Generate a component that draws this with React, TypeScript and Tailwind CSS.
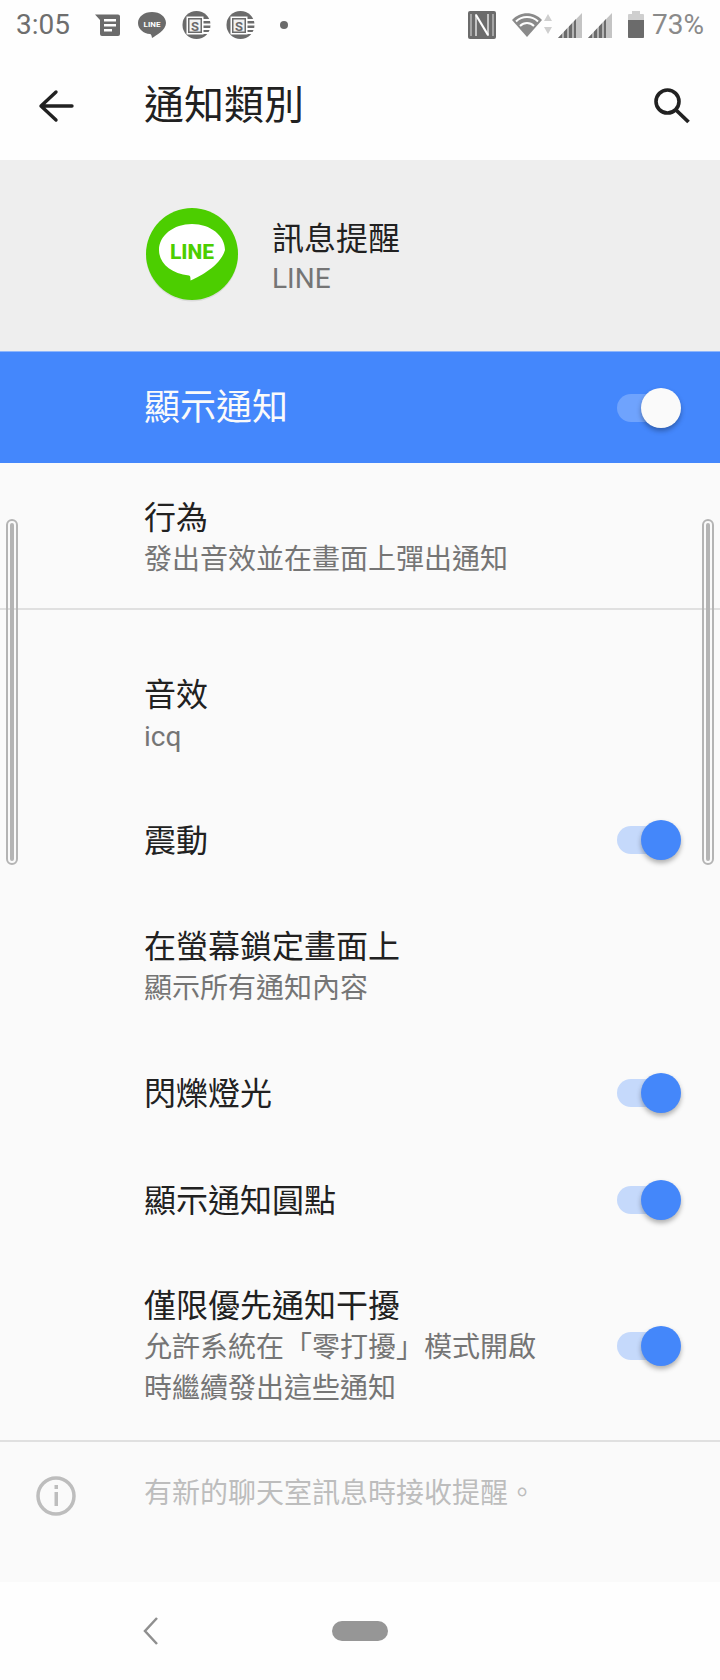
import React from 'react';

const font = { fontFamily: 'Roboto, "Noto Sans CJK TC", sans-serif' };

const Toggle = ({ white = false }: { white?: boolean }) => (
  <div className="relative h-[40px] w-[64px] shrink-0">
    <div className={`absolute left-0 top-[6px] h-[28px] w-[56px] rounded-full ${white ? 'bg-[#6fa3fd]' : 'bg-[#c5d9fb]'}`} />
    <div
      className={`absolute right-0 top-0 h-[40px] w-[40px] rounded-full shadow-[0_3px_5px_rgba(0,0,0,0.3)] ${white ? 'bg-[#fafafa]' : 'bg-[#4487fa]'}`}
    />
  </div>
);

const Row = ({ title, sub, on, h }: { title: string; sub?: string[]; on?: boolean; h: string }) => (
  <div className={`flex items-center justify-between pl-[144px] pr-[39px] ${h}`}>
    <div className="pt-[2px]">
      <div className="text-[32px] leading-[42px] text-[#212121]">{title}</div>
      {sub?.map(s => (
        <div key={s} className="text-[28px] leading-[41px] text-[#757575]">{s}</div>
      ))}
    </div>
    {on && <Toggle />}
  </div>
);

const ScrollBar = ({ side }: { side: string }) => (
  <div className={`absolute top-[519px] h-[346px] w-[12px] rounded-full border-2 border-[#b4b4b4] p-[2px] ${side}`}>
    <div className="h-full w-full rounded-full bg-[#b4b4b4]" />
  </div>
);

const SIcon = () => (
  <svg width="30" height="30" viewBox="0 0 30 30" className="shrink-0">
    <circle cx="14.500" cy="15" r="14" fill="#6b6b6b" />
    <rect x="4.500" y="6.500" width="17" height="18" fill="#fefefe" />
    <rect x="6" y="8" width="14" height="15" fill="#6b6b6b" />
    <rect x="7.500" y="9.500" width="11" height="12" fill="#f2f2f2" />
    <path d="M21 9h9v2h-9zM21 13.500h9v2h-9zM21 18h9v2h-9zM21 22h7v2h-7z" fill="#fefefe" />
    <text x="13" y="20.500" fontSize="13" fontWeight="700" textAnchor="middle" fill="#6b6b6b" fontFamily="Roboto">S</text>
  </svg>
);

const Signal = () => (
  <svg width="25" height="26" viewBox="0 0 25 26" className="shrink-0">
    <path d="M0 26 L24 1 V26Z" fill="#c4c4c4" />
    <path d="M0 26 L18 7 V26Z" fill="#6b6b6b" />
    <path d="M5 26V19M10 26V14M15 26V9" stroke="#fefefe" strokeWidth="1" fill="none" />
  </svg>
);

const StatusBar = () => (
  <div className="flex h-[54px] items-center bg-[#fefefe] pb-[5px] pl-[16px]">
    <span className="w-[54px] text-[28px] leading-[32px] text-[#6e6e6e]">3:05</span>
    <svg width="26" height="24" viewBox="0 0 26 24" className="ml-[25px] shrink-0">
      <path d="M0 1.500 H23 a2 2 0 0 1 2 2 V21 a2 2 0 0 1 -2 2 H7 a2 2 0 0 1 -2 -2 V7Z" fill="#6b6b6b" />
      <path d="M9 6h12v2.500H9zM9 11h12v2.500H9zM9 16h8v2.500H9z" fill="#fefefe" />
    </svg>
    <svg width="28" height="28" viewBox="0 0 28 28" className="ml-[17px] shrink-0">
      <path d="M14 1C6 1 0 5.800 0 12c0 6 5.500 10.500 12 11 1 .1 1.500 1 2 4 4-2.500 14-8 14-15C28 5.800 22 1 14 1Z" fill="#6b6b6b" />
      <text x="14" y="15.500" fontSize="8" fontWeight="700" textAnchor="middle" fill="#fefefe" fontFamily="Roboto">LINE</text>
    </svg>
    <div className="ml-[16px]"><SIcon /></div>
    <div className="ml-[14px]"><SIcon /></div>
    <div className="ml-[24px] h-[8px] w-[8px] shrink-0 rounded-full bg-[#6b6b6b]" />
    <svg width="28" height="28" viewBox="0 0 28 28" className="ml-[180px] shrink-0">
      <rect x="0" y="0" width="28" height="28" rx="2" fill="#6b6b6b" />
      <path d="M8 3v22M20 3v22" stroke="#fefefe" strokeWidth="1.200" fill="none" />
      <path d="M8 4L20 24" stroke="#fefefe" strokeWidth="2.200" fill="none" />
      <path d="M3 3v22M25 3v22" stroke="#fefefe" strokeWidth="0.800" fill="none" />
    </svg>
    <svg width="40" height="26" viewBox="0 0 40 26" className="ml-[16px] shrink-0">
      <path d="M15 25 L0 8 C8 -1 22 -1 30 8Z" fill="#8a8a8a" />
      <path d="M4 9.500C10 3.500 20 3.500 26 9.500M8 14C12 10 18 10 22 14" stroke="#fefefe" strokeWidth="2" fill="none" />
      <path d="M36 2l4 7h-8zM32 15h8l-4 7z" fill="#cfcfcf" />
    </svg>
    <div className="ml-[6px]"><Signal /></div>
    <div className="ml-[5px]"><Signal /></div>
    <svg width="16" height="27" viewBox="0 0 16 27" className="ml-[15px] shrink-0">
      <path d="M4 0h8v3h3a1 1 0 0 1 1 1v22a1 1 0 0 1-1 1H1a1 1 0 0 1-1-1V4a1 1 0 0 1 1-1h3z" fill="#cfcfcf" />
      <path d="M0 9h16v17a1 1 0 0 1-1 1H1a1 1 0 0 1-1-1z" fill="#6b6b6b" />
    </svg>
    <span className="ml-[8px] text-[28px] leading-[32px] text-[#8a8a8a]">73%</span>
  </div>
);

export default function App() {
  return (
    <div className="relative flex h-[1680px] w-[720px] flex-col overflow-hidden bg-[#fafafa]" style={font}>
      <StatusBar />

      {/* toolbar */}
      <div className="flex h-[106px] items-center justify-between bg-[#fefefe] pb-[2px] pl-[38px] pr-[30px]">
        <svg width="36" height="34" viewBox="0 0 36 34" className="shrink-0">
          <path d="M34 17H4M18 3L3 17l15 14" stroke="#212121" strokeWidth="3.400" fill="none" strokeLinecap="round" strokeLinejoin="round" />
        </svg>
        <h1 className="ml-[70px] flex-1 text-[40px] font-normal leading-[50px] text-[#212121]">通知類別</h1>
        <svg width="36" height="36" viewBox="0 0 36 36" className="shrink-0">
          <circle cx="13.500" cy="13.500" r="11.500" stroke="#212121" strokeWidth="3.600" fill="none" />
          <path d="M21.500 21.500L34.500 34" stroke="#212121" strokeWidth="3.800" />
        </svg>
      </div>

      {/* app header */}
      <div className="flex h-[191px] items-center bg-[#eeeeee] pb-[2px] pl-[146px]">
        <svg width="92" height="94" viewBox="0 0 92 94" className="shrink-0">
          <circle cx="46" cy="47.500" r="46" fill="#000" opacity="0.08" />
          <circle cx="46" cy="46" r="46" fill="#4cce00" />
          <path
            d="M46 16C27.500 16 13 27.500 13 42c0 13 11.500 23.500 30 25.500 1.500.3 1.500 2 1.500 5 7-3 30-14 34.500-30.500C79 27.500 64.500 16 46 16Z"
            fill="#fff"
          />
          <text x="46" y="51" fontSize="21" fontWeight="800" textAnchor="middle" fill="#4cce00" fontFamily="Roboto">LINE</text>
        </svg>
        <div className="ml-[34px] pt-[4px]">
          <div className="text-[32px] leading-[44px] text-[#212121]">訊息提醒</div>
          <div className="text-[28px] leading-[36px] text-[#757575]">LINE</div>
        </div>
      </div>

      {/* master switch */}
      <div className="flex h-[112px] items-center justify-between border-t border-[#8fb6fb] bg-[#4487fc] pl-[144px] pr-[39px]">
        <span className="pt-[1px] text-[36px] text-[#fafafa]">顯示通知</span>
        <Toggle white />
      </div>

      {/* behavior */}
      <div className="flex h-[147px] items-start border-b-2 border-[#e0e0e0] pl-[144px] pt-[34px]">
        <div>
          <div className="text-[32px] leading-[42px] text-[#212121]">行為</div>
          <div className="pt-[2px] text-[28px] leading-[37px] text-[#757575]">發出音效並在畫面上彈出通知</div>
        </div>
      </div>

      <div className="pb-[1px] pt-[33px]">
        <Row h="h-[143px]" title="音效" sub={['icq']} />
        <Row h="h-[108px]" title="震動" on />
        <Row h="h-[145px]" title="在螢幕鎖定畫面上" sub={['顯示所有通知內容']} />
        <Row h="h-[107px]" title="閃爍燈光" on />
        <Row h="h-[107px]" title="顯示通知圓點" on />
        <Row h="h-[186px]" title="僅限優先通知干擾" sub={['允許系統在「零打擾」模式開啟', '時繼續發出這些通知']} on />
      </div>

      {/* footer note */}
      <div className="flex h-[142px] items-start border-t-2 border-[#e0e0e0] pl-[36px] pt-[34px]">
        <svg width="40" height="40" viewBox="0 0 40 40" className="shrink-0">
          <circle cx="20" cy="20" r="18" stroke="#bdbdbd" strokeWidth="3.500" fill="none" />
          <rect x="18.500" y="9" width="3.500" height="4" fill="#bdbdbd" />
          <rect x="18.500" y="16" width="3.500" height="14" fill="#bdbdbd" />
        </svg>
        <span className="-mt-[2px] ml-[68px] text-[28px] leading-[40px] text-[#bdbdbd]">有新的聊天室訊息時接收提醒。</span>
      </div>

      {/* nav bar */}
      <div className="flex flex-1 items-center bg-[#fefefe] pl-[141px]">
        <svg width="18" height="30" viewBox="0 0 18 30" className="shrink-0">
          <path d="M16 2L4 15l12 13" stroke="#8f8f8f" strokeWidth="2.500" fill="none" />
        </svg>
        <div className="ml-[173px] h-[20px] w-[56px] rounded-full bg-[#969696]" />
      </div>

      <ScrollBar side="left-[6px]" />
      <ScrollBar side="left-[702px]" />
    </div>
  );
}
